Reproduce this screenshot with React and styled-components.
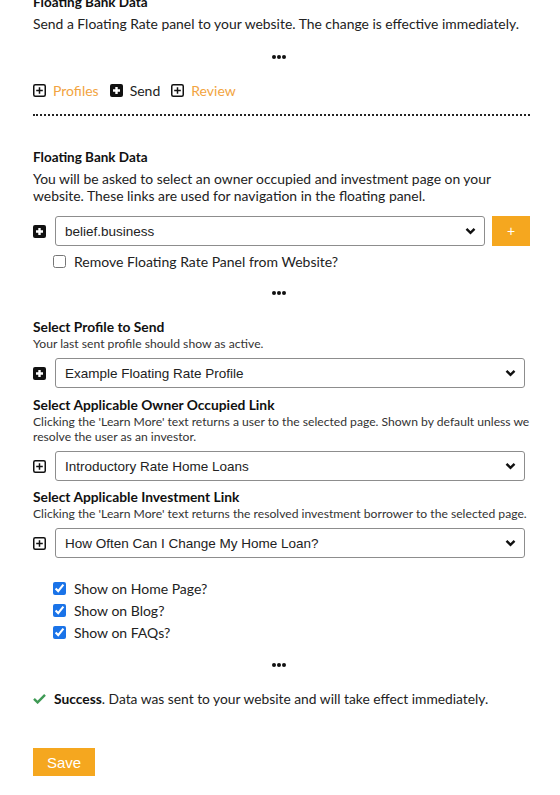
import React from 'react';
import styled, { createGlobalStyle } from 'styled-components';

const GlobalStyle = createGlobalStyle`
  body {
    margin: 0;
    background: #fff;
    font-family: Lato, "Open Sans", sans-serif;
    color: #222;
  }
`;

const Page = styled.div`
  margin-top: -8px;
  padding: 0 30px 40px 33px;
`;

const Title = styled.div`
  font-weight: bold;
  font-size: ${(p) => (p.$small ? '13.8px' : '13.5px')};
  line-height: ${(p) => (p.$small ? '18px' : '20px')};
  margin-top: ${(p) => p.$mt || 0}px;
  color: #111;
`;

const Text = styled.div`
  font-size: 13.9px;
  line-height: ${(p) => p.$lh || 17}px;
  margin-top: ${(p) => p.$mt || 0}px;
`;

const Hint = styled.div`
  font-size: 12.15px;
  line-height: 15px;
  color: #333;
`;

const Dots = styled.div`
  display: flex;
  justify-content: center;
  align-items: center;
  gap: 1px;
  height: 20px;
  margin-top: ${(p) => p.$mt || 0}px;
  padding-right: 6px;

  span {
    width: 4px;
    height: 4px;
    border-radius: 50%;
    background: #111;
  }
`;

const Tabs = styled.div`
  display: flex;
  align-items: center;
  gap: 11px;
  height: 20px;
  margin-top: 13px;
`;

const Tab = styled.div`
  display: flex;
  align-items: center;
  gap: 7px;
  font-size: 14px;
  color: ${(p) => (p.$active ? '#222' : '#f2a441')};
`;

const Divider = styled.div`
  margin-top: 14px;
  border-top: 2px dotted #222;
`;

const FieldRow = styled.div`
  display: flex;
  align-items: center;
  gap: 9px;
  margin-top: ${(p) => p.$mt || 0}px;
  margin-right: ${(p) => p.$mr || 0}px;
`;

const SelectWrap = styled.div`
  position: relative;
  flex: 1;

  svg {
    position: absolute;
    right: 9px;
    top: 11px;
    pointer-events: none;
  }
`;

const Select = styled.select`
  appearance: none;
  width: 100%;
  height: 30px;
  box-sizing: border-box;
  border: 1px solid #8d8d8d;
  border-radius: 3px;
  background: #fff;
  padding: 0 30px 0 9px;
  font-family: "Liberation Sans", Arial, sans-serif;
  font-size: 13.5px;
  color: #222;
`;

const AddButton = styled.button`
  width: 38px;
  height: 30px;
  margin-left: -2px;
  border: none;
  background: #f5a71f;
  color: #fff;
  font-size: 14px;
  font-family: "Liberation Sans", Arial, sans-serif;
  padding: 0;
`;

const CheckList = styled.div`
  margin-top: ${(p) => p.$mt || 0}px;
`;

const CheckRow = styled.label`
  display: flex;
  align-items: center;
  gap: 8px;
  height: ${(p) => p.$h || 20}px;
  padding-left: 20px;
  font-size: 14px;

  input {
    margin: 0;
    width: 13px;
    height: 13px;
    accent-color: #1a73e8;
  }
`;

const Success = styled.div`
  display: flex;
  align-items: center;
  gap: 8px;
  height: 20px;
  margin-top: 13px;
  font-size: 13.8px;

  b {
    color: #111;
  }
`;

const SaveButton = styled.button`
  margin-top: 40px;
  width: 62px;
  height: 28px;
  border: none;
  background: #f5a71f;
  color: #fff;
  font-family: "Liberation Sans", Arial, sans-serif;
  font-size: 15px;
  padding: 0;
`;

function PlusSquare({ filled }) {
  if (filled) {
    return (
      <svg width="13" height="13" viewBox="0 0 13 13">
        <rect x="0" y="0" width="13" height="13" rx="2" fill="#111" />
        <path d="M6.5 3v7M3 6.5h7" stroke="#fff" strokeWidth="2.4" />
      </svg>
    );
  }
  return (
    <svg width="13" height="13" viewBox="0 0 13 13">
      <rect x="0.75" y="0.75" width="11.5" height="11.5" rx="1.5" fill="none" stroke="#111" strokeWidth="1.5" />
      <path d="M6.5 3.2v6.6M3.2 6.5h6.6" stroke="#111" strokeWidth="1.5" />
    </svg>
  );
}

function Chevron() {
  return (
    <svg width="11" height="8" viewBox="0 0 11 8">
      <path d="M1.5 1.8l4 4 4-4" fill="none" stroke="#111" strokeWidth="2.4" />
    </svg>
  );
}

function Check() {
  return (
    <svg width="13" height="11" viewBox="0 0 13 11">
      <path d="M1 5.8l3.6 3.6L12 1.8" fill="none" stroke="#3f9a55" strokeWidth="2.4" />
    </svg>
  );
}

function Field({ filled, value, mt, mr, children }) {
  return (
    <FieldRow $mt={mt} $mr={mr}>
      <PlusSquare filled={filled} />
      <SelectWrap>
        <Select defaultValue={value}>
          <option>{value}</option>
        </Select>
        <Chevron />
      </SelectWrap>
      {children}
    </FieldRow>
  );
}

function DotSep({ mt }) {
  return (
    <Dots $mt={mt}>
      <span />
      <span />
      <span />
    </Dots>
  );
}

export default function App() {
  return (
    <>
      <GlobalStyle />
      <Page>
        <Title>Floating Bank Data</Title>
        <Text $lh={20} $mt={2}>
          Send a Floating Rate panel to your website. The change is effective immediately.
        </Text>
        <DotSep mt={13} />

        <Tabs>
          <Tab>
            <PlusSquare />
            Profiles
          </Tab>
          <Tab $active>
            <PlusSquare filled />
            Send
          </Tab>
          <Tab>
            <PlusSquare />
            Review
          </Tab>
        </Tabs>
        <Divider />

        <Title $mt={31}>Floating Bank Data</Title>
        <Text $mt={3}>
          You will be asked to select an owner occupied and investment page on your
          website. These links are used for navigation in the floating panel.
        </Text>
        <Field filled value="belief.business" mt={12}>
          <AddButton>+</AddButton>
        </Field>
        <CheckList $mt={5}>
          <CheckRow>
            <input type="checkbox" />
            Remove Floating Rate Panel from Website?
          </CheckRow>
        </CheckList>
        <DotSep mt={12} />

        <Title $small $mt={15}>Select Profile to Send</Title>
        <Hint>Your last sent profile should show as active.</Hint>
        <Field filled value="Example Floating Rate Profile" mt={7} mr={5} />

        <Title $small $mt={8}>Select Applicable Owner Occupied Link</Title>
        <Hint>
          Clicking the 'Learn More' text returns a user to the selected page. Shown by default unless we
          resolve the user as an investor.
        </Hint>
        <Field value="Introductory Rate Home Loans" mt={7} mr={5} />

        <Title $small $mt={7}>Select Applicable Investment Link</Title>
        <Hint>Clicking the 'Learn More' text returns the resolved investment borrower to the selected page.</Hint>
        <Field value="How Often Can I Change My Home Loan?" mt={7} mr={5} />

        <CheckList $mt={19}>
          <CheckRow $h={22}>
            <input type="checkbox" defaultChecked />
            Show on Home Page?
          </CheckRow>
          <CheckRow $h={22}>
            <input type="checkbox" defaultChecked />
            Show on Blog?
          </CheckRow>
          <CheckRow $h={22}>
            <input type="checkbox" defaultChecked />
            Show on FAQs?
          </CheckRow>
        </CheckList>
        <DotSep mt={12} />

        <Success>
          <Check />
          <span>
            <b>Success</b>. Data was sent to your website and will take effect immediately.
          </span>
        </Success>

        <SaveButton>Save</SaveButton>
      </Page>
    </>
  );
}
